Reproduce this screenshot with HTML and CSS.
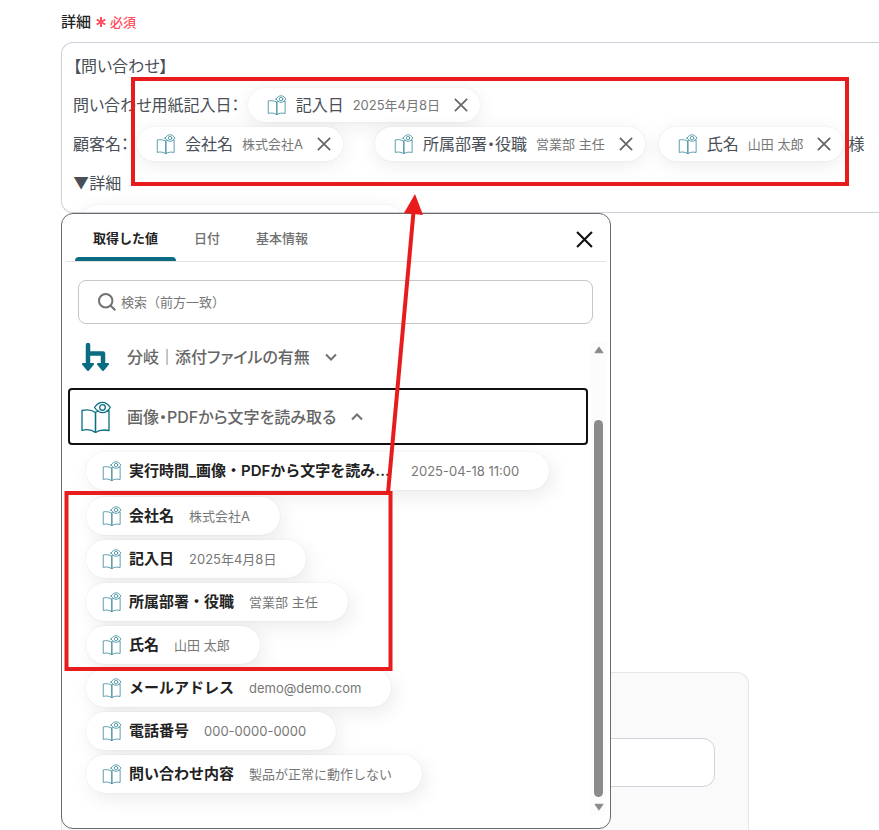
FILE: index.html
```
<!DOCTYPE html>
<html lang="ja">
<head>
    <meta charset="UTF-8">
    <meta name="viewport" content="width=device-width, initial-scale=1.0">
    <title>詳細</title>
    <link rel="stylesheet" href="styles.css">
</head>
<body>
    <!-- Shared icons -->
    <svg class="icon-defs" aria-hidden="true">
        <symbol id="icon-book" viewBox="0 0 30 32">
            <g fill="none" stroke="#0b6e84" stroke-width="1.3" stroke-linejoin="round" stroke-linecap="round">
                <path d="M14.5 11.500C11 9 5.500 8.500 1 9.500V29.500C6 28 11 29 14.500 31.500Z"/>
                <path d="M14.500 11.500V31.500C18 29 23 28.500 28 29.500V9.500L26 10"/>
                <path d="M14.500 11.500C15.500 10.700 16.500 10.300 17.500 10"/>
                <path d="M13.500 6.500C16 2.800 18.500 1.300 21.500 1.300C24.500 1.300 27 2.800 29.300 6.500C27 10.200 24.500 11.700 21.500 11.700C18.500 11.700 16 10.200 13.500 6.500Z"/>
                <circle cx="21.500" cy="6.500" r="2.800"/>
            </g>
        </symbol>
        <symbol id="icon-close" viewBox="0 0 16 16">
            <path d="M1 1L15 15M15 1L1 15" fill="none" stroke="currentColor" stroke-width="2"/>
        </symbol>
    </svg>

    <main class="page">
        <div class="field">
            <div class="field-label" id="detailLabel">詳細 <span class="required"><svg viewBox="0 0 10 10" aria-hidden="true"><path d="M5 0V10M0.700 2.500L9.300 7.500M9.300 2.500L0.700 7.500"/></svg>必須</span></div>
            <div class="editor" role="textbox" aria-labelledby="detailLabel" contenteditable="true" spellcheck="false">
                <div class="line">【問い合わせ】</div>
                <div class="line">
                    <span class="line-text">問い合わせ用紙記入日：</span>
                    <span class="tag"><svg class="book"><use href="#icon-book"/></svg><span class="name">記入日</span><span class="value">2025年4月8日</span><button type="button" aria-label="記入日を削除"><svg><use href="#icon-close"/></svg></button></span>
                </div>
                <div class="line">
                    <span class="line-text">顧客名：</span>
                    <span class="tag"><svg class="book"><use href="#icon-book"/></svg><span class="name">会社名</span><span class="value">株式会社A</span><button type="button" aria-label="会社名を削除"><svg><use href="#icon-close"/></svg></button></span>
                    <span class="tag tag-spaced"><svg class="book"><use href="#icon-book"/></svg><span class="name">所属部署・役職</span><span class="value">営業部 主任</span><button type="button" aria-label="所属部署・役職を削除"><svg><use href="#icon-close"/></svg></button></span>
                    <span class="tag tag-name"><svg class="book"><use href="#icon-book"/></svg><span class="name">氏名</span><span class="value">山田 太郎</span><button type="button" aria-label="氏名を削除"><svg><use href="#icon-close"/></svg></button></span>
                    <span class="line-text suffix">様</span>
                </div>
                <div class="line">▼詳細</div>
                <div class="line"><span class="tag tag-clipped"></span></div>
            </div>

            <div class="picker">
                <div class="picker-header">
                    <div class="tabs" role="tablist">
                        <button type="button" role="tab" class="tab active" aria-selected="true">取得した値</button>
                        <button type="button" role="tab" class="tab">日付</button>
                        <button type="button" role="tab" class="tab">基本情報</button>
                    </div>
                    <button type="button" class="picker-close" aria-label="閉じる"><svg><use href="#icon-close"/></svg></button>
                </div>
                <div class="search">
                    <svg viewBox="0 0 18 18" aria-hidden="true"><circle cx="7.700" cy="7.700" r="6.700"/><path d="M12.500 12.500L17.300 17.300"/></svg>
                    <input type="text" aria-label="検索" placeholder="検索（前方一致）">
                </div>
                <div class="picker-body">
                    <div class="picker-list">
                        <button type="button" class="group">
                            <svg class="group-icon" viewBox="0 0 30 32" aria-hidden="true">
                                <path d="M7 4V24M7 12.500H22V24" fill="none" stroke="#0b6b82" stroke-width="4.500" stroke-linejoin="round" stroke-linecap="round"/>
                                <path d="M2 23H12L7 29ZM17 23H27L22 29Z" fill="#0b6b82" stroke="#0b6b82" stroke-width="2" stroke-linejoin="round"/>
                            </svg>
                            <span class="group-name">分岐｜添付ファイルの有無</span>
                            <svg class="chevron" viewBox="0 0 12 8" aria-hidden="true"><path d="M1 1.500L6 6.500L11 1.500"/></svg>
                        </button>
                        <button type="button" class="group focused" aria-expanded="true">
                            <svg class="group-icon"><use href="#icon-book"/></svg>
                            <span class="group-name">画像・PDFから文字を読み取る</span>
                            <svg class="chevron" viewBox="0 0 12 8" aria-hidden="true"><path d="M1 6.500L6 1.500L11 6.500"/></svg>
                        </button>
                        <div class="chips">
                            <button type="button" class="chip"><svg class="book"><use href="#icon-book"/></svg><span class="name name-long">実行時間_画像・PDFから文字を読み...</span><span class="value">2025-04-18 11:00</span></button>
                        </div>
                        <div class="chips">
                            <button type="button" class="chip"><svg class="book"><use href="#icon-book"/></svg><span class="name">会社名</span><span class="value">株式会社A</span></button>
                            <button type="button" class="chip"><svg class="book"><use href="#icon-book"/></svg><span class="name">記入日</span><span class="value">2025年4月8日</span></button>
                            <button type="button" class="chip"><svg class="book"><use href="#icon-book"/></svg><span class="name">所属部署・役職</span><span class="value">営業部 主任</span></button>
                            <button type="button" class="chip"><svg class="book"><use href="#icon-book"/></svg><span class="name">氏名</span><span class="value">山田 太郎</span></button>
                            <button type="button" class="chip"><svg class="book"><use href="#icon-book"/></svg><span class="name">メールアドレス</span><span class="value">demo@demo.com</span></button>
                            <button type="button" class="chip"><svg class="book"><use href="#icon-book"/></svg><span class="name">電話番号</span><span class="value">000-0000-0000</span></button>
                            <button type="button" class="chip"><svg class="book"><use href="#icon-book"/></svg><span class="name">問い合わせ内容</span><span class="value">製品が正常に動作しない</span></button>
                        </div>
                    </div>
                    <div class="scrollbar" aria-hidden="true">
                        <svg viewBox="0 0 9 7"><path d="M4.500 1L8 6H1Z"/></svg>
                        <span class="thumb"></span>
                        <svg viewBox="0 0 9 7"><path d="M4.500 6L8 1H1Z"/></svg>
                    </div>
                </div>
            </div>
        </div>

        <section class="card">
            <input type="text" class="card-input" aria-label="値">
        </section>
    </main>

    <!-- Callout: picked values and where they were inserted -->
    <svg class="callout" viewBox="0 0 879 830" aria-hidden="true">
        <rect x="133" y="79" width="714" height="105"/>
        <rect x="66.500" y="493" width="324" height="176"/>
        <path d="M388 493L413.500 212"/>
        <polygon points="415,194 404,213 423,215"/>
    </svg>
</body>
</html>
```

FILE: styles.css
```
* { margin: 0; padding: 0; box-sizing: border-box; }
body {
    font-family: Inter, "Noto Sans CJK JP", sans-serif;
    line-height: 20px;
    background: #fff;
    color: #222;
    height: 100vh;
    overflow: hidden;
}
button, input { font: inherit; color: inherit; background: none; border: none; }
button { cursor: pointer; }
svg { display: block; flex: none; }
.icon-defs { position: absolute; width: 0; height: 0; }
.page { display: flex; flex-direction: column; height: 100%; padding: 10px 0 0 61px; }

/* Label */
.field { position: relative; flex: none; }
.field-label { display: flex; align-items: center; gap: 5px; height: 24px; margin-bottom: 8px; font-size: 15px; font-weight: 500; }
.required { display: flex; align-items: center; gap: 4px; color: #ff4d5e; font-size: 13px; }
.required svg { width: 10px; height: 10px; }
.required path { fill: none; stroke: #ff4d5e; stroke-width: 2; }

/* Editor */
.editor { height: 171px; padding: 3px 0 0 11px; border: 1px solid #cdd0d8; border-right: none; border-radius: 12px 0 0 12px; overflow: hidden; outline: none; color: #4a4f57; font-size: 16px; font-feature-settings: "palt"; white-space: nowrap; }
.line { display: flex; align-items: center; height: 39px; }
.line-text { flex: none; }
.tag { display: flex; align-items: center; flex: none; height: 34px; margin-left: 8px; padding: 0 12px 0 19px; background: #fff; border-radius: 17px; box-shadow: 0 4px 20px rgba(0,0,0,0.08), 0 0 2px rgba(0,0,0,0.08); }
.tag .name { margin: 0 9px; }
.tag .value { margin-right: 14px; color: #777; font-size: 13px; }
.tag button svg { width: 14px; height: 14px; color: #666; }
.tag-spaced { margin-left: 32px; }
.tag-name { margin-left: 14px; }
.tag-clipped { align-self: flex-start; width: 322px; margin-top: 3px; }
.suffix { margin-left: 5px; }
.book { width: 20px; height: 20px; opacity: 0.8; }

/* Value picker */
.picker { position: absolute; top: 203px; left: 0; width: 550px; padding: 0 4px 13px; background: #fff; border: 1px solid #6b6b6b; border-radius: 12px; }
.picker-header { display: flex; justify-content: space-between; height: 48px; padding: 0 13px 0 9px; border-bottom: 1px solid #e2e2e2; }
.tabs { display: flex; }
.tab { position: relative; padding: 1px 18px 0; color: #707070; font-size: 13px; font-weight: 500; }
.tab.active { color: #222; font-weight: 700; }
.tab.active::after { content: ""; position: absolute; left: 0; right: 0; bottom: 0; height: 4px; background: #0b6b82; border-radius: 4px 4px 0 0; }
.picker-close { padding-top: 4px; color: #111; }
.picker-close svg { width: 17px; height: 17px; }
.search { display: flex; align-items: center; gap: 5px; height: 44px; margin: 18px 13px 4px 12px; padding: 0 19px; border: 1px solid #c6c6c6; border-radius: 8px; }
.search svg { width: 18px; height: 18px; }
.search svg * { fill: none; stroke: #707070; stroke-width: 2; }
.search input { flex: 1; outline: none; font-size: 13px; }
.search input::placeholder { color: #767676; opacity: 1; }
.picker-body { display: flex; justify-content: space-between; }
.picker-list { width: 520px; margin-left: 2px; padding-bottom: 22px; }
.group { display: flex; align-items: center; width: 100%; height: 57px; padding: 0 11px; border: 2px solid transparent; border-radius: 4px; color: #666; font-size: 16px; font-weight: 500; font-feature-settings: "palt"; }
.group + .group { margin-top: 3px; }
.group.focused { border-color: #111; }
.group-icon { width: 30px; height: 32px; margin-right: 16px; }
.chevron { width: 12px; height: 8px; margin-left: 15px; }
.chevron path { fill: none; stroke: #707070; stroke-width: 2; }
.chips { display: flex; flex-direction: column; align-items: flex-start; gap: 5px; margin: 7px 0 0 18px; }
.chip { display: flex; align-items: center; height: 38px; padding: 0 30px 0 16px; background: #fff; border-radius: 19px; box-shadow: 4px 6px 20px rgba(0,0,0,0.08), 0 0 2px rgba(0,0,0,0.08); }
.chip .name { margin: 0 15px 0 7px; white-space: nowrap; color: #222; font-size: 15px; font-weight: 600; text-align: left; }
.chip .name-long { width: 267px; }
.chip .value { color: #777; font-size: 13px; }
.scrollbar { display: flex; flex-direction: column; align-items: center; width: 15px; margin-top: 14px; padding: 4px 0; background: #fcfcfc; }
.scrollbar svg { width: 10px; height: 8px; }
.scrollbar path { fill: #8b8b8b; stroke: #8b8b8b; stroke-width: 1; stroke-linejoin: round; }
.thumb { flex: 1; width: 9px; margin: 66px 0 6px; background: #8b8b8b; border-radius: 5px; }

/* Card behind the picker */
.card { flex: 1; width: 688px; margin-top: 459px; padding: 65px 33px 0; background: #fafafa; border: 1px solid #e5e5e5; border-bottom: none; border-radius: 12px 12px 0 0; }
.card-input { width: 100%; height: 49px; background: #fff; border: 1px solid #cfd3de; border-radius: 12px; }

.callout { position: absolute; top: 0; left: 0; width: 879px; height: 830px; pointer-events: none; }
.callout rect, .callout path { fill: none; stroke: #e81c1c; stroke-width: 4; }
.callout polygon { fill: #e81c1c; }
```
